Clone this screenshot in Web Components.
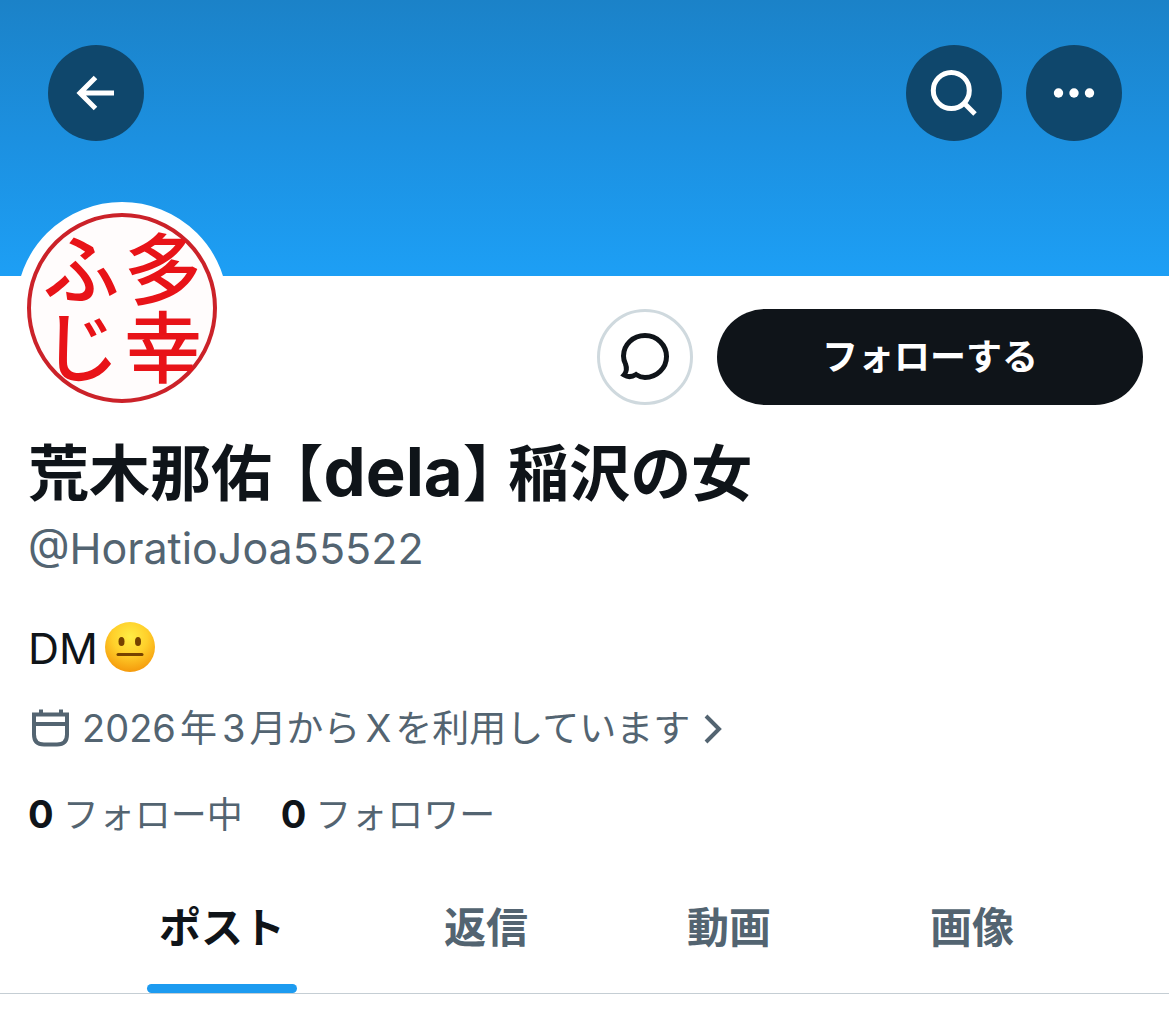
<!DOCTYPE html>
<html lang="ja">
<head>
<meta charset="utf-8">
<meta name="viewport" content="width=device-width, initial-scale=1">
<title>プロフィール</title>
<style>
  body {
    margin: 0;
    background: #fff;
    color: #0f1419;
    font-family: Inter, "Noto Sans CJK JP", sans-serif;
    --muted: #536471;
    --accent: #1d9bf0;
    --line: #cfd9de;
  }
</style>
</head>
<body>
<profile-page></profile-page>

<script>
/**
 * Defines a custom element whose shadow root is cloned from a template.
 *
 * @param {string} name - The tag name.
 * @param {string} html - The markup and styles of the element.
 */
function define (name, html) {
  const template = document.createElement('template')
  template.innerHTML = html

  customElements.define(name,
    class extends HTMLElement {
      /**
       * Creates an instance of the current type.
       */
      constructor () {
        super()
        this.attachShadow({ mode: 'open' })
        this.shadowRoot.appendChild(template.content.cloneNode(true))

        // The inner control carries the accessible name.
        const button = this.shadowRoot.querySelector('button')
        if (button && this.hasAttribute('label')) {
          button.setAttribute('aria-label', this.getAttribute('label'))
        }
      }
    }
  )
}

// Round button with an icon.
define('icon-button', `
<style>
  :host {
    display: block;
    flex: none;
  }

  button {
    display: flex;
    align-items: center;
    justify-content: center;
    box-sizing: border-box;
    width: 96px;
    height: 96px;
    padding: 0;
    border: 0;
    border-radius: 50%;
    background: #0f476c;
    color: #fff;
    cursor: pointer;
  }

  :host([outlined]) button {
    border: 3px solid var(--line);
    background: #fff;
    color: #0f1419;
  }
</style>
<button type="button"><slot></slot></button>
`)

// Banner with the navigation buttons.
define('profile-banner', `
<style>
  :host {
    display: flex;
    align-items: flex-start;
    gap: 24px;
    box-sizing: border-box;
    height: 276px;
    padding: 45px 47px 0 48px;
    background: linear-gradient(#1b82c8, #1c90e0 50%, #1d9ff5);
  }

  .spacer {
    flex: 1;
  }

  svg {
    display: block;
    fill: none;
    stroke: currentColor;
    stroke-width: 5;
  }
</style>
<icon-button label="戻る">
  <svg width="48" height="48" viewBox="0 0 48 48"><path d="M42 24H8M23.500 8.500L8 24l15.500 15.500"/></svg>
</icon-button>
<div class="spacer"></div>
<icon-button label="検索">
  <svg width="56" height="56" viewBox="0 0 56 56"><circle cx="25.300" cy="25.500" r="18"/><path d="M38 38l11 11"/></svg>
</icon-button>
<icon-button label="その他">
  <svg width="48" height="12" viewBox="0 0 48 12"><g fill="currentColor" stroke="none"><circle cx="8.500" cy="6" r="4.700"/><circle cx="24" cy="6" r="4.700"/><circle cx="39.500" cy="6" r="4.700"/></g></svg>
</icon-button>
`)

// Name seal in a white ring, read in columns from the right.
define('profile-avatar', `
<style>
  :host {
    display: block;
    box-sizing: border-box;
    width: 212px;
    height: 212px;
    border: 11px solid #fff;
    border-radius: 50%;
    background: #fff;
  }

  .seal {
    display: flex;
    align-items: center;
    justify-content: center;
    box-sizing: border-box;
    height: 100%;
    padding-right: 14px;
    border: 4px solid #cb2229;
    border-radius: 50%;
    background: #fffcfc;
    color: #e81318;
    font: 500 78px/82px "Liberation Sans", "Noto Sans CJK JP", sans-serif;
  }

  .columns {
    flex: none;
    writing-mode: vertical-rl;
    white-space: nowrap;
  }
</style>
<div class="seal"><div class="columns">多幸<br>ふじ</div></div>
`)

// Avatar on the left, message and follow buttons on the right.
define('profile-actions', `
<style>
  :host {
    display: flex;
    align-items: flex-start;
    gap: 24px;
    height: 129px;
    padding: 0 26px 0 16px;
  }

  profile-avatar {
    margin: -74px auto 0 0;
  }

  icon-button,
  .follow {
    margin-top: 33px;
  }

  .follow {
    flex: 0 1 426px;
    height: 96px;
    padding: 0;
    border: 0;
    border-radius: 48px;
    background: #0f1419;
    color: #fff;
    font: 700 36px/48px Inter, "Noto Sans CJK JP", sans-serif;
    cursor: pointer;
  }

  svg {
    display: block;
  }
</style>
<profile-avatar></profile-avatar>
<icon-button outlined label="メッセージ">
  <svg width="56" height="56" viewBox="0 0 56 56" fill="none" stroke="currentColor" stroke-width="5"><path d="M7 46c2.500-3 3-7 1.500-11C7 32 6.500 30 6.500 27 6.500 15.500 16 6.500 28 6.500S49.500 16 49.500 27.500 40 48.500 28 48.500c-3.500 0-6-1-9-3-4 2.500-8 3-12 .5z"/></svg>
</icon-button>
<button class="follow" type="button">フォローする</button>
`)

// Name, handle, bio, join date and counts.
define('profile-info', `
<style>
  :host {
    display: block;
    padding: 33px 28px 23px;
    color: var(--muted);
  }

  h1,
  p {
    margin: 0;
  }

  h1 {
    color: #0f1419;
    font-size: 61px;
    font-weight: 700;
    line-height: 72px;
    font-feature-settings: "halt";
  }

  .group {
    margin: 0 15px 0 21px;
  }

  .group span {
    font-size: 67px;
    line-height: 1;
  }

  a {
    color: inherit;
    text-decoration: none;
  }

  .handle {
    margin-top: 10px;
    font-size: 43px;
    line-height: 56px;
  }

  .bio {
    display: flex;
    align-items: center;
    gap: 6px;
    margin-top: 44px;
    color: #0f1419;
    font-size: 43px;
    line-height: 56px;
  }

  .joined {
    display: flex;
    align-items: center;
    margin-top: 29px;
    font-size: 37px;
    line-height: 48px;
  }

  .date {
    margin: 0 12px 0 5px;
  }

  .date span {
    margin: 0 4px 0 5px;
    font-size: 38px;
    line-height: 1;
  }

  .counts {
    display: flex;
    gap: 38px;
    margin-top: 37px;
    font-size: 36px;
    line-height: 48px;
  }

  .counts a {
    display: flex;
    align-items: baseline;
    gap: 9px;
  }

  b {
    color: #0f1419;
    font-size: 38px;
    font-weight: 700;
  }

  svg {
    display: block;
    flex: none;
  }
</style>
<h1>荒木那佑<span class="group">【<span>dela</span>】</span>稲沢の女</h1>
<p class="handle">@HoratioJoa55522</p>
<p class="bio">DM<svg width="52" height="52" viewBox="0 0 52 52" role="img" aria-label="😐">
  <defs>
    <radialGradient id="glow" cx=".5" cy=".3" r=".7">
      <stop offset="0" stop-color="#ffed45"/>
      <stop offset=".5" stop-color="#ffd02b"/>
      <stop offset="1" stop-color="#f59a0c"/>
    </radialGradient>
  </defs>
  <circle cx="26" cy="25" r="25" fill="url(#glow)"/>
  <g fill="#764200"><ellipse cx="17.500" cy="19.500" rx="3" ry="4.600"/><ellipse cx="34" cy="19.500" rx="3" ry="4.600"/><rect x="12.500" y="31" width="27" height="3" rx="1.500"/></g>
</svg></p>
<a class="joined" href="#about">
  <svg width="44" height="44" viewBox="0 0 44 44" fill="none" stroke="currentColor" stroke-width="4"><path d="M6 7.500h33v20q0 10-10 10H16q-10 0-10-10zM6 17h33M13 2.500v5M33 2.500v5"/></svg>
  <span class="date"><span>2026</span>年<span>3</span>月から<span>X</span>を利用しています</span>
  <svg width="22" height="32" viewBox="0 0 22 32" fill="none" stroke="currentColor" stroke-width="4"><path d="M4 3l13 13L4 29"/></svg>
</a>
<div class="counts">
  <a href="#following"><b>0</b>フォロー中</a>
  <a href="#followers"><b>0</b>フォロワー</a>
</div>
`)

// One tab, marked with a bar when it is selected.
define('profile-tab', `
<style>
  :host {
    display: block;
  }

  button {
    position: relative;
    display: block;
    height: 131px;
    padding: 0;
    border: 0;
    background: none;
    color: var(--muted);
    font: 700 42px/56px Inter, "Noto Sans CJK JP", sans-serif;
    cursor: pointer;
  }

  :host([selected]) button {
    color: #0f1419;
  }

  :host([selected]) button::after {
    content: "";
    position: absolute;
    right: -12px;
    bottom: 0;
    left: -12px;
    height: 9px;
    border-radius: 5px;
    background: var(--accent);
  }
</style>
<button type="button"><slot></slot></button>
`)

define('profile-tabs', `
<style>
  :host {
    display: flex;
    justify-content: center;
    gap: 13.6vw;
    padding-left: 4px;
    border-bottom: 1px solid #c5ced4;
  }
</style>
<profile-tab selected>ポスト</profile-tab>
<profile-tab>返信</profile-tab>
<profile-tab>動画</profile-tab>
<profile-tab>画像</profile-tab>
`)

define('profile-page', `
<style>
  :host {
    display: block;
  }
</style>
<profile-banner></profile-banner>
<profile-actions></profile-actions>
<profile-info></profile-info>
<profile-tabs></profile-tabs>
`)
</script>
</body>
</html>
